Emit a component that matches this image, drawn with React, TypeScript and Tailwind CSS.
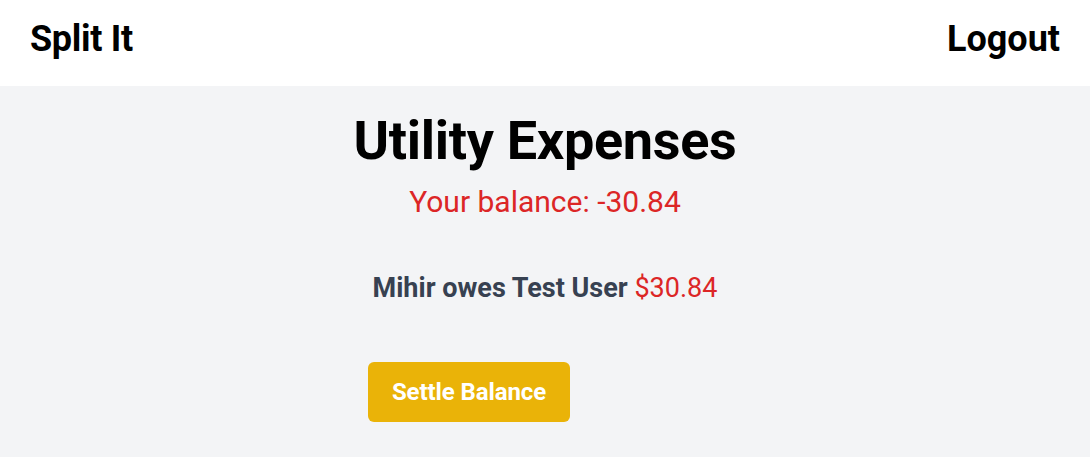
import React from 'react';

export default function App() {
  return (
    <div className="min-h-screen bg-gray-100 font-['Roboto',sans-serif]">
      <header className="h-[86px] bg-white flex items-start justify-between px-[30px] pt-[19px]">
        <h1 className="text-4xl tracking-[-0.3px] font-bold text-black">Split It</h1>
        <button className="text-4xl font-bold text-black">Logout</button>
      </header>

      <main className="flex flex-col items-center pt-[28px]">
        <h2 className="text-[54px] leading-none tracking-[-0.3px] font-bold text-black">Utility Expenses</h2>
        <p className="mt-[16px] text-3xl text-[#dc2626]">Your balance: -30.84</p>

        <div className="mt-[50px] text-[27px] leading-9">
          <span className="font-bold text-[#374151]">Mihir owes Test User</span>{' '}
          <span className="text-[#dc2626]">$30.84</span>
        </div>

        <div className="w-[354px] mt-[56px]">
          <button className="w-[202px] h-[60px] rounded-md bg-[#eab308] text-white text-[24px] tracking-[-0.1px] font-bold">
            Settle Balance
          </button>
        </div>
      </main>
    </div>
  );
}
